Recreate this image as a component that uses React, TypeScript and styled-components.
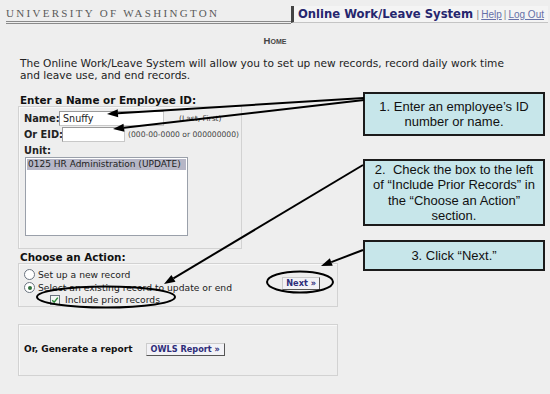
import React from 'react';
import styled, { createGlobalStyle } from 'styled-components';

const GlobalStyle = createGlobalStyle`
  html, body {
    margin: 0;
    padding: 0;
    background: #eeeeee;
  }
  body {
    font-family: 'DejaVu Sans', Verdana, sans-serif;
    font-size: 10px;
    color: #111;
  }
`;

const Page = styled.div`
  position: relative;
  width: 550px;
  height: 394px;
  overflow: hidden;
  background: #eeeeee;
`;

const Header = styled.div`
  display: flex;
  align-items: flex-end;
  padding: 5px 2px 0 6px;
  height: 19px;
`;

const UwMark = styled.div`
  width: 285px;
  height: 14px;
  font-family: 'Liberation Serif', 'Times New Roman', serif;
  font-size: 11px;
  letter-spacing: 2.3px;
  color: #5a5a5a;
  line-height: 12px;
  border-bottom: 3px double #8a8a8a;
  box-sizing: content-box;
  white-space: nowrap;
`;

const TitleBar = styled.div`
  flex: 1;
  display: flex;
  align-items: center;
  height: 16px;
  margin-bottom: 1px;
  border-left: 3px solid #444;
  border-bottom: 1px solid #c4c4c4;
  background: #f4f4f4;
  padding-left: 4px;
`;

const Title = styled.span`
  font-family: 'DejaVu Sans', Verdana, sans-serif;
  font-weight: bold;
  font-size: 11.6px;
  color: #26266e;
  white-space: nowrap;
`;

const TopLinks = styled.span`
  margin-left: auto;
  padding-right: 2px;
  font-family: 'Liberation Sans', Arial, sans-serif;
  font-size: 10px;
  color: #888;
  white-space: nowrap;

  a {
    color: #6670a8;
    text-decoration: underline;
    margin: 0 2px;
  }
`;

const Home = styled.div`
  margin-top: 11px;
  text-align: center;
  font-family: 'Liberation Sans', Arial, sans-serif;
  font-variant: small-caps;
  font-weight: bold;
  font-size: 9.5px;
  line-height: 12px;
  color: #444;
`;

const Content = styled.div`
  padding: 0 0 0 18px;
`;

const Intro = styled.p`
  margin: 11px 0 0 2px;
  width: 510px;
  font-size: 10.6px;
  line-height: 11.5px;
  color: #222;
`;

const SectionHeading = styled.div<{ $top: number }>`
  margin: ${p => p.$top}px 0 0 2px;
  font-weight: bold;
  font-size: 10.4px;
  line-height: 12px;
  color: #111;
`;

const Box = styled.div<{ $width: number; $height: number }>`
  width: ${p => p.$width}px;
  height: ${p => p.$height}px;
  box-sizing: border-box;
  border: 1px solid #d2d2d2;
  box-shadow: inset 1px 1px 0 #f8f8f8;
`;

const IdBox = styled(Box)`
  padding: 3px 0 0 5px;
  display: flex;
  flex-direction: column;
`;

const FieldRow = styled.div`
  display: flex;
  align-items: center;
  height: 16px;
`;

const Label = styled.span<{ $width: number }>`
  flex: none;
  width: ${p => p.$width}px;
  font-weight: bold;
  font-size: 9.8px;
  color: #222;
  white-space: nowrap;
`;

const TextInput = styled.div<{ $width: number }>`
  flex: none;
  width: ${p => p.$width}px;
  height: 15px;
  box-sizing: border-box;
  background: #fff;
  border: 1px solid #c8c8c8;
  border-top-color: #9a9a9a;
  border-left-color: #9a9a9a;
  padding: 1px 3px;
  font-size: 9.6px;
  line-height: 12px;
  color: #222;
`;

const Hint = styled.span<{ $gap: number }>`
  margin-left: ${p => p.$gap}px;
  font-size: 7.6px;
  color: #444;
  white-space: nowrap;
`;

const UnitLabel = styled.div`
  margin-top: 3px;
  font-weight: bold;
  font-size: 9.8px;
  line-height: 12px;
  color: #222;
`;

const ListBox = styled.div`
  margin-left: 1px;
  width: 163px;
  height: 79px;
  box-sizing: border-box;
  background: #fff;
  border: 1px solid #9aa0aa;
  padding: 1px;
`;

const ListOption = styled.div<{ $selected?: boolean }>`
  height: 11px;
  line-height: 11px;
  font-size: 9px;
  padding-left: 1px;
  color: #222;
  white-space: nowrap;
  background: ${p => (p.$selected ? '#b6b6c6' : 'transparent')};
`;

const ActionBox = styled(Box)`
  display: flex;
  align-items: flex-start;
  padding: 3px 0 0 5px;
`;

const Choices = styled.div`
  display: flex;
  flex-direction: column;
`;

const Choice = styled.div<{ $indent?: number; $height: number }>`
  display: flex;
  align-items: center;
  height: ${p => p.$height}px;
  padding-left: ${p => p.$indent ?? 0}px;
  font-size: 9.2px;
  color: #222;
  white-space: nowrap;
`;

const Radio = styled.span<{ $checked?: boolean }>`
  position: relative;
  flex: none;
  width: 9px;
  height: 9px;
  margin-right: 3px;
  border-radius: 50%;
  border: 1px solid #6b7480;
  background: #fff;

  &::after {
    content: '';
    display: ${p => (p.$checked ? 'block' : 'none')};
    position: absolute;
    left: 2.5px;
    top: 2.5px;
    width: 4px;
    height: 4px;
    border-radius: 50%;
    background: #2f6f3a;
  }
`;

const Check = styled.span`
  display: flex;
  flex: none;
  align-items: center;
  justify-content: center;
  width: 8px;
  height: 8px;
  margin-right: 5px;
  border: 1px solid #6b7480;
  background: #f4f8f4;
`;

const Button = styled.span`
  display: inline-block;
  height: 13px;
  box-sizing: border-box;
  padding: 0 4px;
  background: #f2f2f6;
  border: 1px solid #555;
  border-top-color: #ccc;
  border-left-color: #ccc;
  font-weight: bold;
  font-size: 8.2px;
  line-height: 11px;
  color: #2e2e7a;
  white-space: nowrap;
`;

const NextButton = styled(Button)`
  margin: 10px 17px 0 auto;
  padding: 0 3px;
`;

const ReportBox = styled(Box)`
  margin-top: 17px;
  display: flex;
  align-items: center;
  padding: 0 0 2px 5px;
`;

const ReportText = styled.span`
  font-weight: bold;
  font-size: 9px;
  color: #111;
  margin-right: 13px;
`;

const Callout = styled.div<{ $top: number; $height: number }>`
  position: absolute;
  left: 363px;
  top: ${p => p.$top}px;
  width: 182px;
  height: ${p => p.$height}px;
  box-sizing: border-box;
  border: 2px solid #1b1b1b;
  background: #c7e6ea;
  display: flex;
  align-items: center;
  justify-content: center;
  text-align: center;
  font-family: 'Liberation Sans', Arial, sans-serif;
  font-size: 13px;
  line-height: 15.5px;
  color: #111;
  padding: 0 6px;
`;

const Overlay = styled.svg`
  position: absolute;
  left: 0;
  top: 0;
  pointer-events: none;
`;

const arrows = [
  { x1: 364, y1: 98, x2: 107, y2: 114 },
  { x1: 364, y1: 100, x2: 113, y2: 129 },
  { x1: 363, y1: 165, x2: 164, y2: 284 },
  { x1: 363, y1: 250, x2: 321, y2: 266 },
];

const Arrow = ({ x1, y1, x2, y2 }: { x1: number; y1: number; x2: number; y2: number }) => {
  const a = Math.atan2(y2 - y1, x2 - x1);
  const len = 11;
  const w = 4;
  const bx = x2 - Math.cos(a) * len;
  const by = y2 - Math.sin(a) * len;
  const px = -Math.sin(a) * w;
  const py = Math.cos(a) * w;
  return (
    <g>
      <line x1={x1} y1={y1} x2={bx} y2={by} stroke="#000" strokeWidth={2} />
      <polygon points={`${x2},${y2} ${bx + px},${by + py} ${bx - px},${by - py}`} fill="#000" />
    </g>
  );
};

export default function App() {
  return (
    <Page>
      <GlobalStyle />
      <Header>
        <UwMark>UNIVERSITY OF WASHINGTON</UwMark>
        <TitleBar>
          <Title>Online Work/Leave System</Title>
          <TopLinks>
            |<a>Help</a>|<a>Log Out</a>
          </TopLinks>
        </TitleBar>
      </Header>

      <Home>Home</Home>

      <Content>
        <Intro>
          The Online Work/Leave System will allow you to set up new records, record daily work time
          <br />
          and leave use, and end records.
        </Intro>

        <SectionHeading $top={13}>Enter a Name or Employee ID:</SectionHeading>
        <IdBox $width={224} $height={143}>
          <FieldRow>
            <Label $width={35}>Name:</Label>
            <TextInput $width={105}>Snuffy</TextInput>
            <Hint $gap={15}>(Last, First)</Hint>
          </FieldRow>
          <FieldRow>
            <Label $width={38}>Or EID:</Label>
            <TextInput $width={63} />
            <Hint $gap={3}>(000-00-0000 or 000000000)</Hint>
          </FieldRow>
          <UnitLabel>Unit:</UnitLabel>
          <ListBox>
            <ListOption $selected>0125 HR Administration (UPDATE)</ListOption>
          </ListBox>
        </IdBox>

        <SectionHeading $top={2}>Choose an Action:</SectionHeading>
        <ActionBox $width={320} $height={44}>
          <Choices>
            <Choice $height={14}>
              <Radio />
              Set up a new record
            </Choice>
            <Choice $height={13}>
              <Radio $checked />
              Select an existing record to update or end
            </Choice>
            <Choice $height={11} $indent={26}>
              <Check>
                <svg width="8" height="8" viewBox="0 0 8 8">
                  <path d="M1.2 4.2 L3.2 6.2 L6.8 1.6" stroke="#2d8a3a" strokeWidth="1.5" fill="none" />
                </svg>
              </Check>
              Include prior records
            </Choice>
          </Choices>
          <NextButton>Next »</NextButton>
        </ActionBox>

        <ReportBox $width={320} $height={52}>
          <ReportText>Or, Generate a report</ReportText>
          <Button>OWLS Report »</Button>
        </ReportBox>
      </Content>

      <Callout $top={92} $height={44}>1. Enter an employee’s ID number or name.</Callout>
      <Callout $top={159} $height={67}>
        2.&nbsp; Check the box to the left of “Include Prior Records” in the “Choose an Action” section.
      </Callout>
      <Callout $top={240} $height={31}>3. Click “Next.”</Callout>

      <Overlay width={550} height={394}>
        {arrows.map((a, i) => (
          <Arrow key={i} {...a} />
        ))}
        <ellipse cx={300} cy={282} rx={33} ry={10.5} fill="none" stroke="#000" strokeWidth={2} />
        <ellipse cx={106} cy={297} rx={69} ry={10.5} fill="none" stroke="#000" strokeWidth={2} />
      </Overlay>
    </Page>
  );
}
